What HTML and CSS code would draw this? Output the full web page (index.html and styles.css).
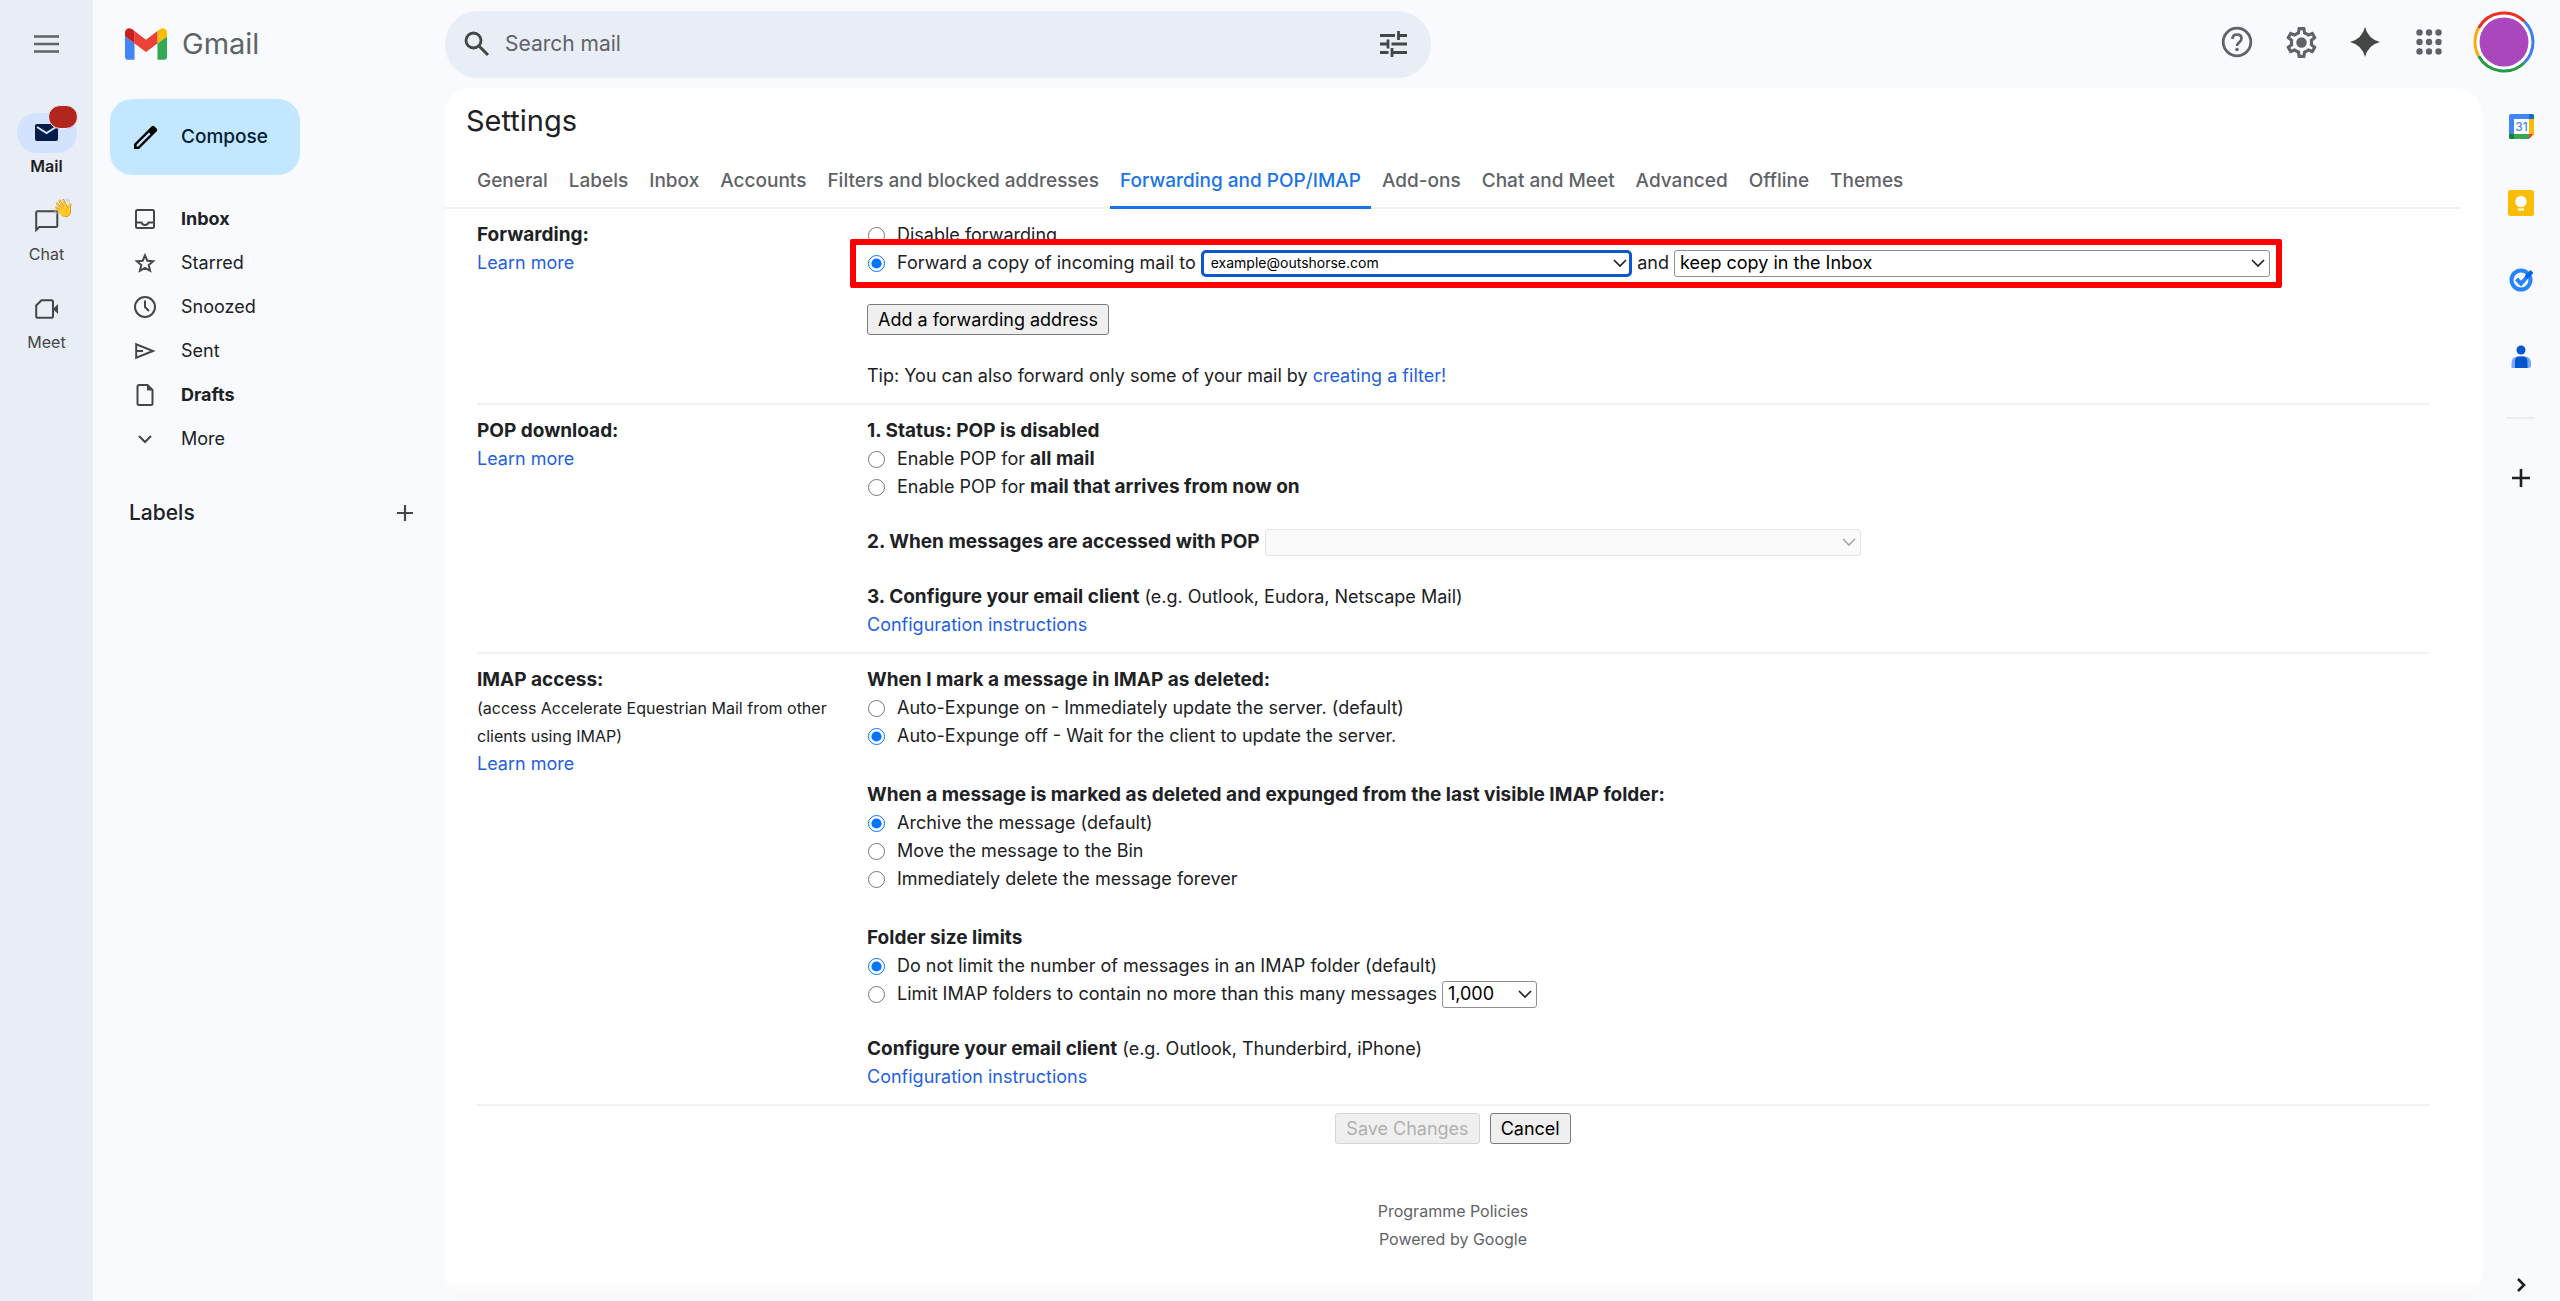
FILE: index.html
```html
<!DOCTYPE html>
<html lang="en">
<head>
    <meta charset="UTF-8">
    <meta name="viewport" content="width=device-width, initial-scale=1.0">
    <title>Settings - Gmail</title>
    <link rel="stylesheet" href="styles.css">
</head>
<body>

<!-- App rail -->
<nav class="rail" aria-label="Apps">
    <button class="icon-button menu-button" type="button" aria-label="Main menu">
        <svg width="25" height="18" viewBox="0 0 25 18"><path d="M0 1.500h25M0 9h25M0 16.500h25" stroke="#5f6368" stroke-width="2.400"/></svg>
    </button>
    <a class="rail-item active" href="#">
        <span class="rail-icon">
            <svg width="24" height="18" viewBox="0 0 24 18"><rect x="0" y="0" width="23" height="17" rx="2" fill="#041e49"/><path d="M2 3l9.500 6L21 3" fill="none" stroke="#d3e3fd" stroke-width="2"/></svg>
            <span class="rail-badge"></span>
        </span>
        Mail
    </a>
    <a class="rail-item" href="#">
        <span class="rail-icon">
            <svg width="24" height="22" viewBox="0 0 24 22"><path d="M1.200 20V2.500Q1.200 1.200 2.500 1.200H21q1.300 0 1.300 1.300v13.200q0 1.300-1.300 1.300H4.200z" fill="none" stroke="#444746" stroke-width="2"/></svg>
            <span class="rail-wave">👋</span>
        </span>
        Chat
    </a>
    <a class="rail-item" href="#">
        <span class="rail-icon">
            <svg width="24" height="20" viewBox="0 0 24 20"><path d="M6.500 1.200h10q1.500 0 1.500 1.500v14.600q0 1.500-1.500 1.500H2.700q-1.500 0-1.500-1.500V6.500z" fill="none" stroke="#444746" stroke-width="2"/><path d="M18 10l5-5v10z" fill="#444746"/></svg>
        </span>
        Meet
    </a>
</nav>

<div class="app">
    <header class="header">
        <a class="logo" href="#">
            <svg width="42" height="32" viewBox="52 42 88 66">
                <path fill="#4285f4" d="M58 108h14V74L52 59v43c0 3.320 2.690 6 6 6"/>
                <path fill="#34a853" d="M120 108h14c3.320 0 6-2.690 6-6V59l-20 15"/>
                <path fill="#fbbc04" d="M120 48v26l20-15v-8c0-7.420-8.470-11.650-14.400-7.200"/>
                <path fill="#ea4335" d="M72 74V48l24 18 24-18v26L96 92"/>
                <path fill="#c5221f" d="M52 51v8l20 15V48l-5.600-4.200c-5.940-4.450-14.400-.22-14.400 7.200"/>
            </svg>
            <span>Gmail</span>
        </a>
        <form class="search">
            <button class="icon-button" type="submit" aria-label="Search">
                <svg width="26" height="26" viewBox="0 0 26 26"><circle cx="9.500" cy="9.500" r="7.500" fill="none" stroke="#444746" stroke-width="2.800"/><path d="M15 15l9 9" stroke="#444746" stroke-width="3"/></svg>
            </button>
            <input class="search-input" type="search" placeholder="Search mail" aria-label="Search mail">
            <button class="icon-button" type="button" aria-label="Show search options">
                <svg width="27" height="26" viewBox="0 0 27 26"><path d="M0 4.500h15M18.500 4.500H27M18.500 0v9M0 13h8M11.500 13H27M8 8.500v9M0 21.500h8.500M12 21.500H27M12 17v9" stroke="#444746" stroke-width="2.800" fill="none"/></svg>
            </button>
        </form>
        <div class="header-tools">
            <button class="icon-button" type="button" aria-label="Support">
                <svg width="32" height="32" viewBox="0 0 32 32"><circle cx="16" cy="16" r="13.800" fill="none" stroke="#5f6368" stroke-width="2.800"/><path d="M11.500 13q0-4.500 4.500-4.500t4.500 4q0 2.200-2.300 3.800Q16 17.800 16 20" fill="none" stroke="#5f6368" stroke-width="2.700"/><circle cx="16" cy="23.500" r="1.800" fill="#5f6368"/></svg>
            </button>
            <button class="icon-button" type="button" aria-label="Settings">
                <svg width="37" height="37" viewBox="0 0 24 24"><path fill="#5f6368" fill-rule="evenodd" d="M19.430 12.980c.04-.32.07-.64.07-.98s-.03-.66-.07-.98l2.110-1.650c.19-.15.24-.42.12-.64l-2-3.460c-.09-.16-.26-.25-.44-.25-.06 0-.12.010-.17.030l-2.490 1c-.52-.4-1.080-.73-1.690-.98l-.38-2.650C14.460 2.180 14.250 2 14 2h-4c-.25 0-.46.18-.49.42l-.38 2.650c-.61.25-1.170.59-1.690.98l-2.490-1c-.06-.02-.12-.03-.18-.03-.17 0-.34.09-.43.25l-2 3.460c-.13.22-.07.49.12.64l2.110 1.650c-.04.32-.07.65-.07.98s.03.66.07.98l-2.110 1.650c-.19.15-.24.42-.12.64l2 3.460c.09.16.26.25.44.25.06 0 .12-.01.17-.03l2.490-1c.52.4 1.080.73 1.690.98l.38 2.650c.03.24.24.42.49.42h4c.25 0 .46-.18.49-.42l.38-2.650c.61-.25 1.170-.59 1.690-.98l2.490 1c.06.02.12.03.18.03.17 0 .34-.09.43-.25l2-3.460c.12-.22.07-.49-.12-.64l-2.110-1.650zm-1.980-1.710c.04.31.05.52.05.73 0 .21-.02.43-.05.73l-.14 1.130.89.7 1.080.84-.7 1.210-1.270-.51-1.040-.42-.9.68c-.43.32-.84.56-1.250.73l-1.060.43-.16 1.130-.2 1.350h-1.400l-.19-1.350-.16-1.130-1.060-.43c-.43-.18-.83-.41-1.230-.71l-.91-.7-1.060.43-1.270.51-.7-1.210 1.080-.84.89-.7-.14-1.130c-.03-.31-.05-.54-.05-.74s.02-.43.05-.73l.14-1.130-.89-.7-1.080-.84.7-1.210 1.270.51 1.040.42.9-.68c.43-.32.84-.56 1.250-.73l1.060-.43.16-1.130.2-1.350h1.390l.19 1.350.16 1.130 1.060.43c.43.18.83.41 1.230.71l.91.7 1.060-.43 1.270-.51.7 1.210-1.070.85-.89.7.14 1.130z"/><circle cx="12" cy="12" r="3.400" fill="#5f6368"/></svg>
            </button>
            <button class="icon-button" type="button" aria-label="Gemini">
                <svg width="32" height="32" viewBox="0 0 32 32"><path d="M16 1q3 12 15 15-12 3-15 15-3-12-15-15Q13 13 16 1z" fill="#444746"/></svg>
            </button>
            <button class="icon-button" type="button" aria-label="Google apps">
                <svg width="26" height="26" viewBox="0 0 26 26" fill="#5f6368"><circle cx="3.500" cy="3.500" r="3.200"/><circle cx="13" cy="3.500" r="3.200"/><circle cx="22.500" cy="3.500" r="3.200"/><circle cx="3.500" cy="13" r="3.200"/><circle cx="13" cy="13" r="3.200"/><circle cx="22.500" cy="13" r="3.200"/><circle cx="3.500" cy="22.500" r="3.200"/><circle cx="13" cy="22.500" r="3.200"/><circle cx="22.500" cy="22.500" r="3.200"/></svg>
            </button>
            <button class="icon-button account" type="button" aria-label="Google Account">
                <svg width="62" height="62" viewBox="0 0 62 62" fill="none" stroke-width="3">
                    <circle cx="31" cy="31" r="27" fill="#fff"/>
                    <path d="M5.600 17A29 29 0 0 1 51.500 10.500" stroke="#ea2f1f"/>
                    <path d="M51.500 10.500A29 29 0 0 1 51.500 51.500" stroke="#3c7ff3"/>
                    <path d="M51.500 51.500A29 29 0 0 1 5.600 45" stroke="#249a41"/>
                    <path d="M5.600 45A29 29 0 0 1 5.600 17" stroke="#fbab09"/>
                    <circle cx="31" cy="31" r="24.500" fill="#ab47bc"/>
                </svg>
            </button>
        </div>
    </header>

    <div class="content">
        <!-- Mailbox folders -->
        <aside class="sidebar">
            <button class="compose" type="button">
                <svg width="27" height="27" viewBox="0 0 27 27"><path d="M2 25v-5L19.500 2.500q1.500-1.500 3 0l2 2q1.500 1.500 0 3L7 25z" fill="#000"/><path d="M4.600 22.400v-1.600L17 8.400l1.600 1.600L6.200 22.400z" fill="#c2e7ff"/></svg>
                <span>Compose</span>
            </button>
            <ul class="folders">
                <li><a class="folder unread" href="#"><svg width="24" height="24" viewBox="0 0 24 24"><rect x="3" y="3" width="18" height="18" rx="1.500"/><path d="M3 15.500h5.500q.8 2.500 3.500 2.500t3.500-2.500H21"/></svg>Inbox</a></li>
                <li><a class="folder" href="#"><svg width="24" height="24" viewBox="0 0 24 24"><path d="M12 4.300l2.300 5.400 5.900.5-4.500 3.900 1.400 5.700-5.100-3-5.100 3 1.400-5.700-4.500-3.900 5.900-.5z"/></svg>Starred</a></li>
                <li><a class="folder" href="#"><svg width="24" height="24" viewBox="0 0 24 24"><circle cx="12" cy="12" r="10"/><path d="M12 5.500V12l4 4"/></svg>Snoozed</a></li>
                <li><a class="folder" href="#"><svg width="24" height="24" viewBox="0 0 24 24"><path d="M3.200 5.200v13.600L20 12z"/><path d="M3.500 12H10"/></svg>Sent</a></li>
                <li><a class="folder unread" href="#"><svg width="24" height="24" viewBox="0 0 24 24"><path d="M14.500 2H6Q4.500 2 4.500 3.500v17Q4.500 22 6 22h12q1.500 0 1.500-1.500V7z"/><path d="M14 2v5.500h5.500z" fill="#444746" stroke="none"/></svg>Drafts</a></li>
                <li><a class="folder" href="#"><svg width="24" height="24" viewBox="0 0 24 24"><path d="M6 9l6 6 6-6"/></svg>More</a></li>
            </ul>
            <div class="labels">
                <h2>Labels</h2>
                <button class="icon-button" type="button" aria-label="Create new label">
                    <svg width="18" height="18" viewBox="0 0 18 18"><path d="M9 1v16M1 9h16" stroke="#444746" stroke-width="2.200"/></svg>
                </button>
            </div>
        </aside>

        <main class="settings">
            <h1>Settings</h1>
            <nav class="tabs" aria-label="Settings sections">
                <a class="tab" href="#">General</a>
                <a class="tab" href="#">Labels</a>
                <a class="tab" href="#">Inbox</a>
                <a class="tab" href="#">Accounts</a>
                <a class="tab" href="#">Filters and blocked addresses</a>
                <a class="tab active" href="#">Forwarding and POP/IMAP</a>
                <a class="tab" href="#">Add-ons</a>
                <a class="tab" href="#">Chat and Meet</a>
                <a class="tab" href="#">Advanced</a>
                <a class="tab" href="#">Offline</a>
                <a class="tab" href="#">Themes</a>
            </nav>

            <form class="settings-form">
                <section class="row">
                    <div class="row-title">
                        <b>Forwarding:</b>
                        <a href="#">Learn more</a>
                    </div>
                    <div class="row-body">
                        <div class="group">
                            <label class="option"><input type="radio" name="forward">Disable forwarding</label>
                            <div class="forward-line">
                                <label class="option"><input type="radio" name="forward" checked>Forward a copy of incoming mail to</label>
                                <select class="address-select" aria-label="Forwarding address"><option>example@outshorse.com</option></select>
                                <label for="keepCopy">and</label>
                                <select class="wide-select" id="keepCopy"><option>keep copy in the Inbox</option></select>
                                <span class="highlight"></span>
                            </div>
                        </div>
                        <div class="group"><button class="button" type="button">Add a forwarding address</button></div>
                        <div class="group"><p>Tip: You can also forward only some of your mail by <a href="#">creating a filter!</a></p></div>
                    </div>
                </section>

                <section class="row">
                    <div class="row-title">
                        <b>POP download:</b>
                        <a href="#">Learn more</a>
                    </div>
                    <div class="row-body">
                        <div class="group">
                            <b>1. Status: POP is disabled</b>
                            <label class="option"><input type="radio" name="pop"><span>Enable POP for <b>all mail</b></span></label>
                            <label class="option"><input type="radio" name="pop"><span>Enable POP for <b>mail that arrives from now on</b></span></label>
                        </div>
                        <div class="inline-field">
                            <label for="popAction"><b>2. When messages are accessed with POP</b></label>
                            <select class="wide-select" id="popAction" disabled></select>
                        </div>
                        <div class="group">
                            <p><b>3. Configure your email client</b> (e.g. Outlook, Eudora, Netscape Mail)</p>
                            <a href="#">Configuration instructions</a>
                        </div>
                    </div>
                </section>

                <section class="row">
                    <div class="row-title">
                        <b>IMAP access:</b>
                        <small>(access Accelerate Equestrian Mail from other clients using IMAP)</small>
                        <a href="#">Learn more</a>
                    </div>
                    <div class="row-body">
                        <div class="group choices">
                            <b>When I mark a message in IMAP as deleted:</b>
                            <label class="option"><input type="radio" name="expunge">Auto-Expunge on - Immediately update the server. (default)</label>
                            <label class="option"><input type="radio" name="expunge" checked>Auto-Expunge off - Wait for the client to update the server.</label>
                        </div>
                        <div class="group choices">
                            <b>When a message is marked as deleted and expunged from the last visible IMAP folder:</b>
                            <label class="option"><input type="radio" name="deleted" checked>Archive the message (default)</label>
                            <label class="option"><input type="radio" name="deleted">Move the message to the Bin</label>
                            <label class="option"><input type="radio" name="deleted">Immediately delete the message forever</label>
                        </div>
                        <div class="group">
                            <b>Folder size limits</b>
                            <label class="option"><input type="radio" name="limit" checked>Do not limit the number of messages in an IMAP folder (default)</label>
                            <div class="inline-field">
                                <label class="option"><input type="radio" name="limit">Limit IMAP folders to contain no more than this many messages</label>
                                <select class="limit-select" aria-label="Message limit"><option>1,000</option></select>
                            </div>
                        </div>
                        <div class="group">
                            <p><b>Configure your email client</b> (e.g. Outlook, Thunderbird, iPhone)</p>
                            <a href="#">Configuration instructions</a>
                        </div>
                    </div>
                </section>

                <div class="actions">
                    <button class="button" type="submit" disabled>Save Changes</button>
                    <button class="button" type="button">Cancel</button>
                </div>
            </form>

            <footer class="footer">
                <a href="#">Programme Policies</a>
                <span>Powered by Google</span>
            </footer>
        </main>

        <!-- Side panel shortcuts -->
        <aside class="side-panel">
            <a href="#" aria-label="Calendar">
                <svg width="28" height="28" viewBox="0 0 28 28">
                    <rect x="2" y="2" width="25" height="25" rx="2" fill="#4285f4"/>
                    <path d="M22 2h3q2 0 2 2v3h-5z" fill="#1967d2"/>
                    <path d="M22 7h5v15h-5z" fill="#fbbc04"/>
                    <path d="M7 22h15v5H7z" fill="#34a853"/>
                    <path d="M2 22h5v5H4q-2 0-2-2z" fill="#188038"/>
                    <path d="M22 22h5v5h-5z" fill="#f9fafe"/>
                    <path d="M22 22h5l-5 5z" fill="#ea4335"/>
                    <path d="M7 7h15v15H7z" fill="#fff"/>
                    <text class="calendar-day" x="14.500" y="19" text-anchor="middle">31</text>
                </svg>
            </a>
            <a href="#" aria-label="Keep">
                <svg width="28" height="28" viewBox="0 0 28 28"><rect x="1" y="1" width="26" height="26" rx="2.500" fill="#fbbc04"/><circle cx="14" cy="12.500" r="5.700" fill="#fff"/><path d="M11 15h6v3h-6zM11 19.500h6v2h-6z" fill="#fff"/></svg>
            </a>
            <a href="#" aria-label="Tasks">
                <svg width="28" height="28" viewBox="0 0 28 28" fill="none"><circle cx="14" cy="14" r="9.500" stroke="#2684fc" stroke-width="4"/><path d="M9.500 13l4.500 4.500L21 10" stroke="#2684fc" stroke-width="4"/><path d="M19 11.500l6-6" stroke="#0066da" stroke-width="4"/></svg>
            </a>
            <a href="#" aria-label="Contacts">
                <svg width="28" height="28" viewBox="0 0 28 28"><circle cx="14" cy="7" r="4.500" fill="#0057cc"/><path d="M4.500 25v-5q0-6.500 6.500-6.500h6.500q6.500 0 6.500 6.500v2.500q0 2.500-2.500 2.500z" fill="#7aa5f5"/><path d="M8 25v-6q0-5.500 4-5.500h4q4.500 0 4.500 5.500v6z" fill="#0057cc"/></svg>
            </a>
            <hr>
            <button class="icon-button" type="button" aria-label="Get add-ons">
                <svg width="20" height="20" viewBox="0 0 20 20"><path d="M10 1v18M1 10h18" stroke="#1f1f1f" stroke-width="2.600"/></svg>
            </button>
            <button class="icon-button collapse" type="button" aria-label="Hide side panel">
                <svg width="10" height="16" viewBox="0 0 10 16"><path d="M2 2l6 6-6 6" fill="none" stroke="#1f1f1f" stroke-width="2.600"/></svg>
            </button>
        </aside>
    </div>
</div>

</body>
</html>
```

FILE: styles.css
```css
* {
    box-sizing: border-box;
}
body {
    display: flex;
    min-height: 100vh;
    margin: 0;
    background-color: #f9fafe;
    color: #202124;
    font-family: Inter, "Liberation Sans", sans-serif;
    font-size: 18px;
    line-height: 28px;
}
a {
    color: #1f5fe0;
    text-decoration: none;
}
b {
    font-size: 19px;
}
p {
    margin: 0;
}
svg {
    display: block;
    flex-shrink: 0;
}
.icon-button {
    padding: 0;
    border: none;
    background: none;
    cursor: pointer;
}

/* App rail */
.rail {
    display: flex;
    flex-direction: column;
    align-items: center;
    flex-shrink: 0;
    width: 93px;
    background-color: #e9edf6;
}
.menu-button {
    margin: 35px 0 60px;
}
.rail-item {
    display: flex;
    flex-direction: column;
    align-items: center;
    height: 88px;
    color: #444746;
    font-size: 16px;
    line-height: 26px;
}
.rail-icon {
    position: relative;
    display: flex;
    align-items: center;
    justify-content: center;
    width: 60px;
    height: 40px;
    border-radius: 20px;
}
.rail-item.active {
    color: #1f1f1f;
    font-weight: 600;
}
.active .rail-icon {
    background-color: #d3e3fd;
}
.rail-badge {
    position: absolute;
    top: -8px;
    right: -1px;
    width: 30px;
    height: 24px;
    border: 1px solid #e9edf6;
    border-radius: 12px;
    background-color: #b3261e;
}
.rail-wave {
    position: absolute;
    top: -5px;
    right: 3px;
    font-size: 18px;
    line-height: 24px;
}

/* Header */
.app {
    display: flex;
    flex: 1;
    flex-direction: column;
    min-width: 0;
}
.header {
    display: flex;
    align-items: center;
    height: 88px;
    padding-right: 25px;
}
.logo {
    display: flex;
    align-items: center;
    gap: 15px;
    width: 352px;
    padding-left: 32px;
    color: #5f6368;
    font-size: 29px;
}
.search {
    display: flex;
    align-items: center;
    gap: 15px;
    width: 986px;
    height: 67px;
    padding: 0 24px 0 19px;
    border-radius: 33px;
    background-color: #e9edf6;
}
.search-input {
    flex: 1;
    padding: 0;
    border: none;
    outline: none;
    background: none;
    font: inherit;
    font-size: 21px;
}
.search-input::placeholder {
    color: #5f6368;
}
.header-tools {
    display: flex;
    align-items: center;
    gap: 24px;
    margin-left: auto;
    padding-bottom: 4px;
}
.header-tools .icon-button {
    display: flex;
    justify-content: center;
    width: 40px;
}
.header-tools .account {
    width: 62px;
}

/* Sidebar */
.content {
    display: flex;
    flex: 1;
}
.sidebar {
    flex-shrink: 0;
    width: 352px;
    padding: 11px 31px 0 17px;
}
.compose {
    display: flex;
    align-items: center;
    gap: 22px;
    height: 76px;
    padding: 0 32px 0 22px;
    border: none;
    border-radius: 22px;
    background-color: #c2e7ff;
    color: #001d35;
    font: inherit;
    font-size: 19px;
    font-weight: 500;
    cursor: pointer;
}
.folders {
    margin: 22px 0 38px;
    padding: 0;
    list-style: none;
}
.folder {
    display: flex;
    align-items: center;
    gap: 24px;
    height: 44px;
    padding-left: 23px;
    color: #202124;
}
.folder svg {
    fill: none;
    stroke: #444746;
    stroke-width: 2;
}
.folder.unread {
    font-weight: bold;
}
.labels {
    display: flex;
    align-items: center;
    justify-content: space-between;
    padding-left: 19px;
}
.labels h2 {
    margin: 0;
    font-size: 21px;
    font-weight: 500;
}

/* Settings panel */
.settings {
    flex: 1;
    min-width: 0;
    border-radius: 26px;
    background: #fff linear-gradient(to top, #f7f7f7, #fff) no-repeat bottom / 100% 24px;
}
.settings h1 {
    margin: 12px 21px 14px;
    font-size: 29px;
    font-weight: normal;
    line-height: 42px;
}
.tabs {
    display: flex;
    gap: 1px;
    margin-right: 21px;
    padding-left: 22px;
    border-bottom: 2px solid #eff1f3;
}
.tab {
    margin-bottom: -2px;
    padding: 0 10px;
    border-bottom: 3px solid transparent;
    color: #5f6368;
    font-size: 19px;
    font-weight: 500;
    line-height: 50px;
}
.tab.active {
    border-color: #1a73e8;
    color: #1a73e8;
}
.settings-form {
    margin: 0 53px 0 32px;
}
.row {
    display: flex;
    padding: 12px 0 13px;
    border-bottom: 2px solid #eff1f3;
}
.row-title {
    display: flex;
    flex-direction: column;
    align-items: flex-start;
    width: 390px;
    padding-right: 30px;
}
.row-title small {
    font-size: 16px;
}
.row-body {
    display: flex;
    flex: 1;
    flex-direction: column;
    gap: 27px;
}
.group {
    display: flex;
    flex-direction: column;
    align-items: flex-start;
}
.group.choices {
    padding-bottom: 4px;
}
.option {
    display: flex;
    align-items: center;
}
input[type="radio"] {
    width: 17px;
    height: 17px;
    margin: 1px 12px 0 1px;
    accent-color: #0075ff;
}
.inline-field {
    display: flex;
    align-items: center;
    gap: 5px;
}
.forward-line {
    position: relative;
    display: flex;
    align-items: center;
    gap: 5px;
    width: 100%;
    max-width: 1403px;
}
/* Red frame round the forwarding choice */
.highlight {
    position: absolute;
    inset: -10px -12px -11px -17px;
    border: 6px solid #f00;
    border-radius: 2px;
    pointer-events: none;
}
select {
    height: 27px;
    padding: 0 26px 0 5px;
    border: 1px solid #8f8f8f;
    border-radius: 3px;
    appearance: none;
    background: #fff url("data:image/svg+xml,%3Csvg xmlns='http://www.w3.org/2000/svg' width='14' height='9'%3E%3Cpath d='M1 1l6 6 6-6' fill='none' stroke='%23222' stroke-width='1.700'/%3E%3C/svg%3E") no-repeat right 4px center;
    color: #000;
    font: inherit;
    line-height: 24px;
}
select:disabled {
    border-color: #e4e4e4;
    background-color: #fafafa;
    background-image: url("data:image/svg+xml,%3Csvg xmlns='http://www.w3.org/2000/svg' width='14' height='9'%3E%3Cpath d='M1 1l6 6 6-6' fill='none' stroke='%23aaa' stroke-width='1.700'/%3E%3C/svg%3E");
    opacity: 1;
}
.address-select {
    flex: 1;
    padding-left: 7px;
    border: 3px solid #0b57d0;
    border-radius: 5px;
    background-position: right 2px center;
    font-size: 14px;
    line-height: 20px;
}
.wide-select {
    width: 596px;
}
.limit-select {
    width: 95px;
}
.button {
    height: 31px;
    padding: 0 10px;
    border: 1px solid #7d7d7d;
    border-radius: 3px;
    background-color: #efefef;
    color: #000;
    font: inherit;
    line-height: 28px;
}
.button:disabled {
    border-color: #d5d5d5;
    color: #b0b0b0;
}
.actions {
    display: flex;
    justify-content: center;
    gap: 10px;
    padding-top: 7px;
}
.footer {
    display: flex;
    flex-direction: column;
    align-items: center;
    margin: 53px 53px 0 32px;
    color: #5f6368;
    font-size: 16px;
}
.footer a {
    color: inherit;
}

/* Side panel */
.side-panel {
    display: flex;
    flex-direction: column;
    align-items: center;
    gap: 49px;
    flex-shrink: 0;
    width: 78px;
    padding: 24px 0 8px;
}
.side-panel hr {
    width: 28px;
    margin: -3px 0 0;
    border: none;
    border-top: 2px solid #eaecef;
}
.calendar-day {
    fill: #4285f4;
    font-size: 12px;
    font-weight: 500;
}
.collapse {
    margin-top: auto;
}
```
